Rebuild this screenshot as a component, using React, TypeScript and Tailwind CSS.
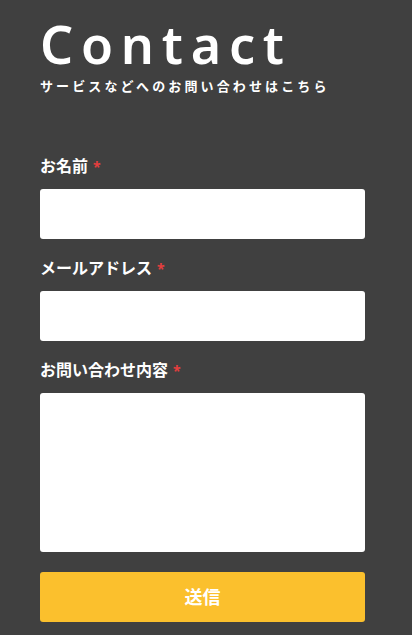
export default function App() {
  const fields = [
    { label: "お名前", id: "name" },
    { label: "メールアドレス", id: "email" },
  ]

  return (
    <div
      className="min-h-[635px] bg-[#404040] pl-10 pr-[47px] pt-[14px] pb-3 text-white"
      style={{ fontFamily: '"Noto Sans", "Noto Sans CJK JP", sans-serif' }}
    >
      {/* Heading */}
      <h1 className="text-[52px] font-semibold leading-[60px] tracking-[0.15em]">Contact</h1>
      <p className="mt-[2px] text-[13px] font-bold leading-5 tracking-[0.24em]">
        サービスなどへのお問い合わせはこちら
      </p>

      {/* Form */}
      <form className="mt-[58px] flex flex-col" onSubmit={(e) => e.preventDefault()}>
        {fields.map((f) => (
          <div key={f.id} className="mb-[17px]">
            <label htmlFor={f.id} className="block text-[16px] font-bold leading-6">
              {f.label}
              <span className="ml-[5px] text-[14px] text-[#e53e3e]">*</span>
            </label>
            <input id={f.id} className="mt-[10px] block h-[50px] w-full rounded-[3px] bg-white text-black outline-none" />
          </div>
        ))}
        <div>
          <label htmlFor="message" className="block text-[16px] font-bold leading-6">
            お問い合わせ内容
            <span className="ml-[5px] text-[14px] text-[#e53e3e]">*</span>
          </label>
          <textarea id="message" className="mt-[10px] block h-[159px] w-full resize-none rounded-[3px] bg-white text-black outline-none" />
        </div>
        <button type="submit" className="mt-[20px] h-[50px] w-full rounded-[3px] bg-[#fbc02d] text-[18px] font-bold text-white">
          送信
        </button>
      </form>
    </div>
  )
}
